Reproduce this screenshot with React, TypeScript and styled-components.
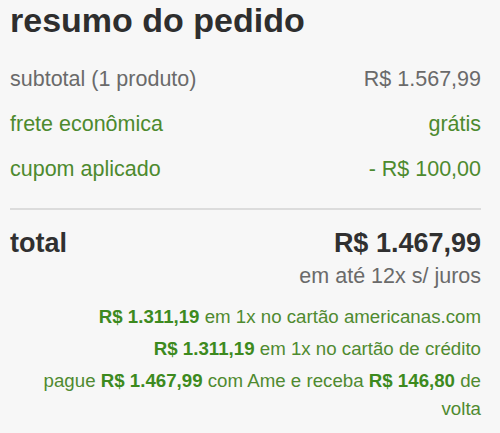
import React from "react";
import styled, { createGlobalStyle } from "styled-components";

const GlobalStyle = createGlobalStyle`
  html, body {
    margin: 0;
    padding: 0;
    background: #f7f7f7;
  }
  body {
    font-family: "Liberation Sans", Arial, sans-serif;
  }
`;

const Summary = styled.section`
  display: flex;
  flex-direction: column;
  padding: 0 19px 0 10px;
  background: #f7f7f7;
  min-height: 433px;
  box-sizing: border-box;
`;

const Title = styled.h1`
  margin: 0 0 17px;
  font-size: 34px;
  line-height: 40px;
  font-weight: 700;
  color: #2e2e2e;
`;

const Row = styled.div<{ $tone?: "gray" | "green" }>`
  display: flex;
  justify-content: space-between;
  align-items: baseline;
  font-size: 21.5px;
  line-height: 45px;
  color: ${(p) => (p.$tone === "green" ? "#4d8a2e" : "#6a6a6a")};
`;

const Divider = styled.hr`
  margin: 16px 0 15px;
  border: 0;
  border-top: 2px solid #dcdcdc;
  height: 0;
`;

const TotalRow = styled.div`
  display: flex;
  justify-content: space-between;
  align-items: baseline;
  font-size: 27px;
  line-height: 36px;
  font-weight: 700;
  color: #303030;
`;

const Installments = styled.div`
  text-align: right;
  font-size: 21.5px;
  line-height: 30px;
  color: #6a6a6a;
  margin-bottom: 12px;
`;

const Offer = styled.p`
  margin: 0 0 4px;
  text-align: right;
  font-size: 18.7px;
  line-height: 28px;
  color: #4f8a30;
`;

const Amount = styled.strong`
  font-weight: 700;
  color: #3d8a1e;
`;

export default function App() {
  return (
    <>
      <GlobalStyle />
      <Summary>
        <Title>resumo do pedido</Title>
        <Row>
          <span>subtotal (1 produto)</span>
          <span>R$ 1.567,99</span>
        </Row>
        <Row $tone="green">
          <span>frete econômica</span>
          <span>grátis</span>
        </Row>
        <Row $tone="green">
          <span>cupom aplicado</span>
          <span>- R$ 100,00</span>
        </Row>
        <Divider />
        <TotalRow>
          <span>total</span>
          <span>R$ 1.467,99</span>
        </TotalRow>
        <Installments>em até 12x s/ juros</Installments>
        <Offer>
          <Amount>R$ 1.311,19</Amount> em 1x no cartão americanas.com
        </Offer>
        <Offer>
          <Amount>R$ 1.311,19</Amount> em 1x no cartão de crédito
        </Offer>
        <Offer>
          pague <Amount>R$ 1.467,99</Amount> com Ame e receba{" "}
          <Amount>R$ 146,80</Amount> de volta
        </Offer>
      </Summary>
    </>
  );
}
